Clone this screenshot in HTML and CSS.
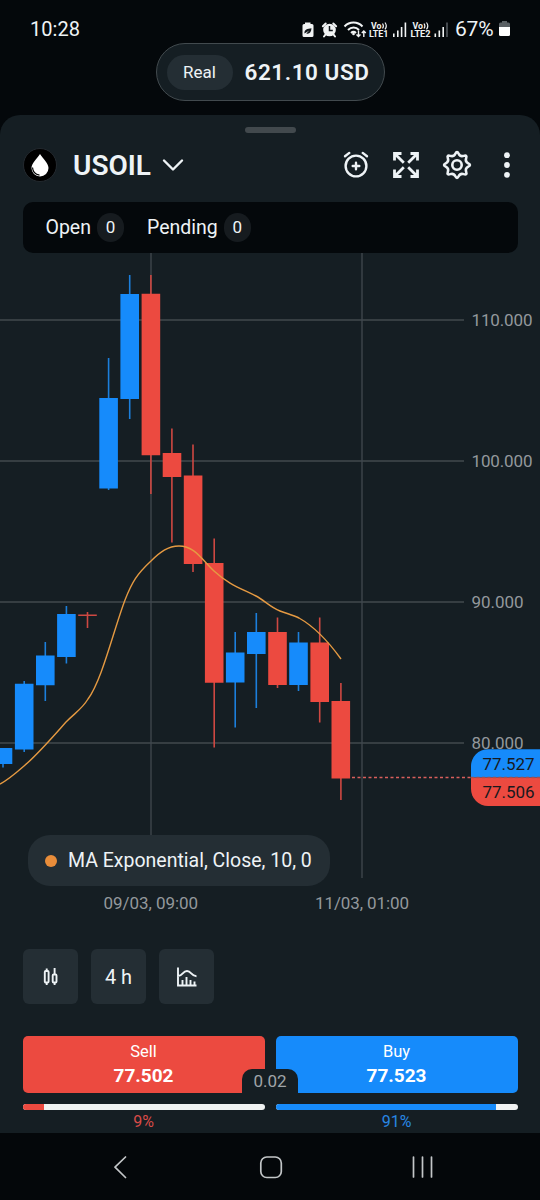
FILE: index.html
```html
<!DOCTYPE html>
<html lang="en">
<head>
<meta charset="utf-8">
<title>USOIL</title>
<link rel="stylesheet" href="styles.css">
</head>
<body>
<div class="screen">
  <header class="status">
    <span class="clock">10:28</span>
    <svg class="status-icons" width="154" height="22" viewBox="300 17 154 22">
      <g fill="#f1f3f4">
        <path d="M305 21.500h5.500v1.500h1.500a1.500 1.500 0 0 1 1.500 1.500v10a1.500 1.500 0 0 1-1.500 1.500h-8a1.500 1.500 0 0 1-1.500-1.500v-10a1.500 1.500 0 0 1 1.500-1.500h1z"/>
        <circle cx="329.500" cy="29" r="6.300"/>
        <path d="M322.900 25.200l2.800-2.700M336.100 25.200l-2.800-2.700M325.500 33.500l-1.500 2M333.500 33.500l1.500 2" stroke="#f1f3f4" stroke-width="2" stroke-linecap="round"/>
      </g>
      <path d="M304.500 32.500c-.5-4 3-5 7-5.300-.3 4-2 6.200-5.200 5.300l3-3" fill="#11161a"/>
      <path d="M329.500 25v4.500h3.300" fill="none" stroke="#11161a" stroke-width="1.500"/>
      <g fill="none" stroke="#f1f3f4" stroke-width="2">
        <path d="M344.500 25.500c5-5.200 13-5.200 18 0M348 29c3.200-3.300 8-3.300 11 0"/>
        <path d="M351 32c1.500-1.400 3.500-1.400 5 0"/>
        <path d="M358.500 29.500v6m-2-2l2 2 2-2M363.800 36v-6m-2 2l2-2 2 2" stroke-width="1.400"/>
      </g>
      <circle cx="353.500" cy="33" r="1.300" fill="#f1f3f4"/>
      <g class="carrier" fill="#f1f3f4">
        <text x="371" y="28" textLength="10.500" lengthAdjust="spacingAndGlyphs">Vo</text>
        <text x="369" y="36.300" textLength="19.500" lengthAdjust="spacingAndGlyphs">LTE1</text>
        <text x="412.500" y="28" textLength="10.500" lengthAdjust="spacingAndGlyphs">Vo</text>
        <text x="410.500" y="36.300" textLength="20" lengthAdjust="spacingAndGlyphs">LTE2</text>
      </g>
      <path d="M382.500 22.500q1.800 2.500 0 5M385 21.500q2.600 3.500 0 6.800M424 22.500q1.800 2.500 0 5M426.500 21.500q2.600 3.500 0 6.800" fill="none" stroke="#f1f3f4" stroke-width="1.200"/>
      <g fill="#f1f3f4">
        <path d="M393 32.500h1.600v3.500h-1.600zM397 29.500h1.600v6.500h-1.600zM400.800 26h1.600v10h-1.600zM404.600 21.500h1.600v14.500h-1.600z"/>
        <path d="M434.500 32.500h1.600v3.500h-1.600zM438.500 29.500h1.600v6.500h-1.600zM442.400 26h1.600v10h-1.600z"/>
        <path d="M446.200 21.500h1.600v14.500h-1.600z" fill="#555b60"/>
      </g>
    </svg>
    <span class="battery-text">67%</span>
    <svg class="battery" width="12" height="16" viewBox="0 0 12 16">
      <path d="M3 0h5v1.500h1.500a1.500 1.500 0 0 1 1.500 1.500v4h-11v-4a1.500 1.500 0 0 1 1.500-1.500h1.500z" fill="#5a6064"/>
      <path d="M0 6h11v7.500a1.500 1.500 0 0 1-1.500 1.500h-8a1.500 1.500 0 0 1-1.500-1.500z" fill="#fff"/>
    </svg>
  </header>

  <div class="account">
    <span class="account-type">Real</span>
    <span class="balance">621.10 USD</span>
  </div>

  <main class="sheet">
    <div class="handle"></div>
    <div class="instrument">
      <svg width="34" height="34" viewBox="-17 -17 34 34">
        <circle r="16.500" fill="#000" stroke="#293036" stroke-width=".8"/>
        <path d="M0-11C3-6 8.500-2 8.500 3a8.500 8.500 0 0 1-17 0C-8.500-2-3-6 0-11z" fill="#fff"/>
        <path d="M-7.500 2.500c.3 4 2.700 7 7 7.700" fill="none" stroke="#000" stroke-width="1.200"/>
      </svg>
      <h1 class="symbol">USOIL</h1>
      <svg class="chevron" width="22" height="14" viewBox="0 0 22 14"><path d="M2 2.500l9 9 9-9" fill="none" stroke="#eef3f6" stroke-width="2.400" stroke-linecap="round" stroke-linejoin="round"/></svg>
      <div class="actions">
        <svg width="30" height="30" viewBox="-15 -15 30 30" fill="none" stroke="#eef3f6" stroke-width="2.400" stroke-linecap="round">
          <circle cx="0" cy="1" r="10.400"/><path d="M0-2.300v6.600M-3.300 1h6.600M-11-8.800l4.300-3.300M11-8.800l-4.300-3.300"/>
        </svg>
        <svg width="30" height="30" viewBox="-15 -15 30 30" fill="none" stroke="#eef3f6" stroke-width="2.800">
          <path d="M-2.200-2.200L-11-11M-11.500-4.500v-7h7M2.200-2.200L11-11M11.500-4.500v-7h-7M-2.200 2.200L-11 11M-11.500 4.500v7h7M2.200 2.200L11 11M11.500 4.500v7h-7"/>
        </svg>
        <svg width="30" height="30" viewBox="-15 -15 30 30" fill="none" stroke="#eef3f6" stroke-width="2.600">
          <path d="M11.280-1.650Q14.600 0 11.280 1.650Q7.950 3.290 9.140 6.810Q10.320 10.320 6.810 9.140Q3.290 7.950 1.650 11.280Q0 14.600-1.650 11.280Q-3.290 7.950-6.810 9.140Q-10.320 10.320-9.140 6.810Q-7.950 3.290-11.280 1.650Q-14.600 0-11.280-1.650Q-7.950-3.290-9.140-6.810Q-10.320-10.320-6.810-9.140Q-3.290-7.950-1.650-11.280Q0-14.600 1.650-11.280Q3.290-7.950 6.810-9.140Q10.320-10.320 9.140-6.810Q7.950-3.290 11.280-1.650Z"/>
          <circle r="4.700"/>
        </svg>
        <svg width="30" height="30" viewBox="-15 -15 30 30" fill="#eef3f6"><circle cy="-9.800" r="2.900"/><circle r="2.900"/><circle cy="9.800" r="2.900"/></svg>
      </div>
    </div>

    <nav class="orders">
      <span class="order-tab">Open <b class="count">0</b></span>
      <span class="order-tab">Pending <b class="count">0</b></span>
    </nav>

    <section class="chart">
      <svg width="540" height="665" viewBox="0 253 540 665">
        <g stroke="#41494e" stroke-width="1.300">
          <path d="M0 320H464M0 461H464M0 602H464M0 743H464M151 253V850M362 253V878"/>
        </g>
        <g class="up">
          <path d="M3 764v3.500M24.200 681v71M45.300 642v59M66.400 606v57.500M108.600 358v132M129.700 275v144M235.200 632v95.500M256.300 613v95M298.500 632v59"/>
          <path class="body" d="M-6.300 748h18.600v16h-18.600zM14.900 683.700h18.600v65.800h-18.600zM36 655.500h18.600v29.800h-18.600zM57.100 614h18.600v43h-18.600zM99.300 398h18.600v90.500h-18.600zM120.400 294h18.600v105h-18.600zM225.900 652.500h18.600v30h-18.600zM247 632h18.600v22h-18.600zM289.200 642.500h18.600v42.500h-18.600z"/>
        </g>
        <g class="down">
          <path d="M87.500 612v16M78.200 615.200h18.600M150.900 275v219M171.900 428.500v114M193 444.500v127.500M214.200 538.500v209M277.500 617.500v70.500M319.700 617.500v105M340.900 683v117"/>
          <path class="body" d="M141.600 293.800h18.600v161.500h-18.600zM162.700 453h18.600v24h-18.600zM183.800 475.500h18.600v88.500h-18.600zM204.900 563h18.600v119.800h-18.600zM268.200 632h18.600v53h-18.600zM310.400 642.500h18.600v59.500h-18.600zM331.500 701h18.600v77.500h-18.600z"/>
        </g>
        <path d="M0 784C8 780 16 773 24 766C38 754 50 740 66 722C76 712 82 709 88 699C102 680 113 632 125 600C132 582 137 574 151 561C160 552 168 546 179 546C195 546 202 560 214 571C228 584 240 588 256 596C264 600 270 607 280 611C288 614 293 615 299 618C315 627 328 641 341 659" fill="none" stroke="#e59a42" stroke-width="1.400"/>
        <g class="axis">
          <text x="471.500" y="326" textLength="61">110.000</text>
          <text x="471.500" y="467" textLength="61">100.000</text>
          <text x="471.500" y="608" textLength="52">90.000</text>
          <text x="471.500" y="749" textLength="52">80.000</text>
          <text x="103.500" y="909" textLength="94.500">09/03, 09:00</text>
          <text x="315" y="909" textLength="94">11/03, 01:00</text>
        </g>
        <path d="M540 749.200V777.500H471V766.500a17 17 0 0 1 17-17.300z" fill="#168bfb"/>
        <path d="M540 806V777.500H471V789a17 17 0 0 0 17 17z" fill="#ec4a40"/>
        <path d="M352 777.500H471" stroke="#d95f5c" stroke-width="1.500" stroke-dasharray="3 2.500"/>
        <path d="M471 777.500H540" stroke="#a3514f" stroke-width="1.300" stroke-dasharray="3 2.500"/>
        <g class="quote"><text x="482.500" y="769.700" textLength="52">77.527</text><text x="482.500" y="798.200" textLength="52">77.506</text></g>
      </svg>
      <div class="indicator"><i class="dot"></i>MA Exponential, Close, 10, 0</div>
    </section>

    <div class="tools">
      <button class="tool"><svg width="16" height="20" viewBox="0 0 16 20" fill="none" stroke="#eef3f6" stroke-width="1.900"><rect x="1.800" y="4" width="3.800" height="11.500" rx="1"/><path d="M3.700 1.500V4M3.700 15.500V18M11.600 1V7.500M11.600 15.500V18"/><rect x="9.700" y="7.500" width="3.800" height="8" rx="1"/></svg></button>
      <button class="tool">4 h</button>
      <button class="tool"><svg width="22" height="22" viewBox="0 0 22 22" fill="none" stroke="#eef3f6" stroke-width="1.900"><path d="M2 1.500V19.500H20.500M2 10C7 10 6.500 5 11 5S15 10.200 20.500 10.200M6.500 19V14M10.500 19V11M14.500 19V14M18.500 19V15.500"/></svg></button>
    </div>

    <div class="trade">
      <div class="side">
        <button class="order sell"><span>Sell</span><strong>77.502</strong></button>
        <div class="sentiment"><div class="fill sell" style="width:9%"></div></div>
        <span class="share sell-text">9%</span>
      </div>
      <div class="side">
        <button class="order buy"><span>Buy</span><strong>77.523</strong></button>
        <div class="sentiment"><div class="fill buy" style="width:91%"></div></div>
        <span class="share buy-text">91%</span>
      </div>
      <span class="lot">0.02</span>
    </div>
  </main>

  <footer class="system-nav">
    <svg width="540" height="67" viewBox="0 1133 540 67" fill="none" stroke="#c3c6c8" stroke-width="1.700" stroke-linecap="round" stroke-linejoin="round">
      <path d="M125.500 1157L115 1167.200l10.500 10.300M413.500 1157v20M422.500 1157v20M431.500 1157v20"/>
      <rect x="260.800" y="1157" width="20.500" height="20.500" rx="6"/>
    </svg>
  </footer>
</div>
</body>
</html>
```
FILE: styles.css
```css
* { box-sizing: border-box; }
body { margin: 0; background: #04080b; font-family: Roboto, sans-serif; color: #eef3f6; }
.screen { width: 540px; height: 1200px; display: flex; flex-direction: column; overflow: hidden; }
svg { display: block; flex: none; }
button { border: 0; padding: 0; font: inherit; color: inherit; }

.status { height: 43px; display: flex; align-items: center; padding: 14px 29px 0 30px; }
.clock { font-size: 20px; letter-spacing: .05px; }
.status-icons { margin-left: auto; }
.battery-text { width: 41px; margin: 0 3px 0 1px; font-size: 21px; letter-spacing: -.2px; }
.carrier { font-size: 8.500px; font-weight: 700; }

.account { align-self: center; width: 229px; height: 58px; margin-bottom: 14px; border: 1.500px solid #424a4e; border-radius: 29px; background: #151e23; display: flex; align-items: center; padding-left: 10px; gap: 12px; }
.account-type { width: 66px; height: 35px; border-radius: 18px; background: #242e34; font-size: 17px; line-height: 35px; text-align: center; }
.balance { font-size: 22.500px; font-weight: 600; letter-spacing: .55px; white-space: nowrap; }

.sheet { height: 1018px; border-radius: 20px 20px 0 0; background: #151e23; }
.handle { width: 51px; height: 6px; margin: 0 auto; border-radius: 3px; background: #42494d; position: relative; top: 12px; }
.instrument { height: 81px; padding: 7px 18px 0 22.500px; display: flex; align-items: center; }
.symbol { margin: 0 11px 0 16.500px; font-size: 28px; font-weight: 600; }
.actions { margin-left: auto; display: flex; gap: 20.500px; }

.orders { height: 51px; margin: 0 22.500px; border-radius: 10px; background: #04080b; display: flex; align-items: center; gap: 23px; padding-left: 23px; }
.order-tab { display: flex; align-items: center; gap: 6px; font-size: 19.500px; }
.count { width: 27px; height: 29px; border-radius: 14px; background: #161b1f; font-size: 17px; font-weight: 400; line-height: 29px; text-align: center; }

.chart { position: relative; height: 665px; }
.up path, .down path { fill: none; stroke-width: 1.600; }
.up path { stroke: #1c7fdb; }
.down path { stroke: #ce4842; }
.up .body { fill: #168bfb; stroke: none; }
.down .body { fill: #ec4a40; stroke: none; }
.axis { font-size: 17px; fill: #93989c; }
.quote { font-size: 17px; fill: #17191e; }
.indicator { position: absolute; left: 28px; top: 582px; width: 302px; height: 51px; border-radius: 22px; background: #242e34; display: flex; align-items: center; gap: 11px; padding-left: 17px; font-size: 19.500px; white-space: nowrap; }
.dot { width: 12px; height: 12px; border-radius: 50%; background: #e98d3a; }

.tools { display: flex; gap: 13px; padding: 31px 23px 0; }
.tool { width: 55px; height: 55px; border-radius: 6px; background: #242e34; display: flex; align-items: center; justify-content: center; font-size: 20px; }

.trade { position: relative; display: grid; grid-template-columns: 1fr 1fr; gap: 11px; padding: 32px 22.500px 0; }
.side { display: flex; flex-direction: column; }
.order { height: 56.500px; padding-bottom: 1px; border-radius: 5px; color: #fff; display: flex; flex-direction: column; align-items: center; justify-content: center; gap: 2px; font-size: 16.500px; line-height: 22px; }
.order strong { font-size: 19px; font-weight: 700; }
.sell { background: #ec4a40; }
.buy { background: #168bfb; }
.sentiment { height: 6px; margin-top: 11.500px; border-radius: 3px; background: #f0f2f2; overflow: hidden; }
.fill { height: 100%; }
.share { text-align: center; font-size: 16px; line-height: 24px; }
.sell-text { color: #d84b48; }
.buy-text { color: #2887e3; }
.lot { position: absolute; left: 242px; top: 65px; width: 56px; height: 24px; border-radius: 10px 10px 0 0; background: #151e23; color: #a0a5a8; font-size: 17px; line-height: 25px; text-align: center; }

.system-nav { height: 67px; background: #04070a; }
```
